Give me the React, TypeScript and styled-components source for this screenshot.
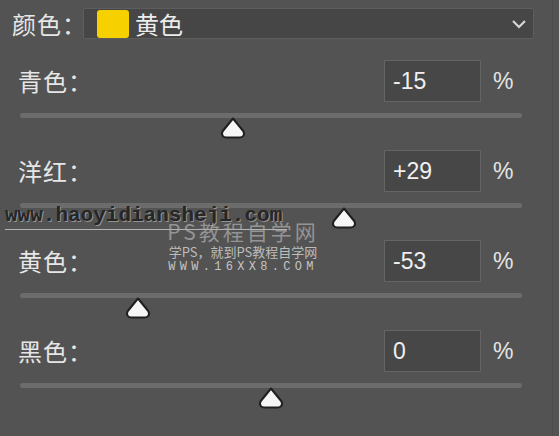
import React from "react";
import styled, { createGlobalStyle } from "styled-components";

const GlobalStyle = createGlobalStyle`
  html, body {
    margin: 0;
    padding: 0;
    background: #535353;
  }
  body {
    font-family: "Noto Sans CJK SC", "Noto Sans", sans-serif;
    color: #e2e2e2;
  }
`;

const Panel = styled.div`
  position: relative;
  width: 553px;
  height: 436px;
  overflow: hidden;
  background: #535353;
  border-right: 1px solid #4b4b4b;
  box-sizing: border-box;
`;

const Header = styled.div`
  display: flex;
  align-items: center;
  padding: 8px 0 0 12px;
  height: 31px;
  margin-bottom: 21px;
`;

const Label = styled.span`
  font-size: 24px;
  letter-spacing: 1px;
  line-height: 1;
  color: #e6e6e6;
  white-space: nowrap;
`;

const HeaderLabel = styled(Label)`
  width: 71px;
`;

const Dropdown = styled.div`
  display: flex;
  align-items: center;
  width: 451px;
  height: 31px;
  box-sizing: border-box;
  padding: 0 6px 0 13px;
  background: #464646;
  border: 1px solid #5d5d5d;
  border-radius: 2px;
`;

const Swatch = styled.span<{ $color: string }>`
  width: 32px;
  height: 28px;
  border-radius: 3px;
  background: ${(p) => p.$color};
  margin-right: 6px;
`;

const DropdownText = styled.span`
  flex: 1;
  font-size: 24px;
  line-height: 1;
  color: #ececec;
`;

const Rows = styled.div`
  display: flex;
  flex-direction: column;
  padding: 0 0 0 20px;
  width: 502px;
`;

const Row = styled.div`
  height: 90px;
`;

const TopLine = styled.div`
  display: flex;
  align-items: center;
  height: 42px;
  margin-bottom: 11px;
`;

const RowLabel = styled(Label)`
  flex: 1;
  margin-left: -2px;
`;

const ValueBox = styled.div`
  width: 97px;
  height: 42px;
  box-sizing: border-box;
  padding-left: 8px;
  display: flex;
  align-items: center;
  background: #474747;
  border: 1px solid #646464;
  font-family: "Liberation Sans", "Noto Sans", sans-serif;
  font-size: 23px;
  color: #efefef;
`;

const Unit = styled.span`
  width: 41px;
  padding-left: 12px;
  box-sizing: border-box;
  font-family: "Liberation Sans", sans-serif;
  font-size: 23px;
  color: #e4e4e4;
`;

const Track = styled.div`
  position: relative;
  height: 5px;
  border-radius: 3px;
  background: #6c6c6c;
`;

const Thumb = styled.svg`
  position: absolute;
  top: 3px;
  transform: translateX(-50%);
`;

/* site stamps laid over the panel */
const Watermark = styled.div`
  position: absolute;
  left: 5px;
  top: 205px;
  pointer-events: none;
`;

const SiteLink = styled.div`
  font-family: "Liberation Mono", monospace;
  font-weight: bold;
  font-size: 21px;
  line-height: 22px;
  color: #262626;
  text-shadow: 1px 1px 0 rgba(205, 205, 205, 0.55);
  border-bottom: 1px solid #b4b4b4;
  width: 282px;
  padding-bottom: 2px;
`;

const Stamp = styled.div`
  position: absolute;
  left: 158px;
  top: 14px;
  width: 160px;
  display: flex;
  flex-direction: column;
  align-items: center;
`;

const StampTitle = styled.div`
  font-family: "Noto Sans CJK SC", sans-serif;
  font-size: 21px;
  line-height: 24px;
  letter-spacing: 3px;
  color: rgba(170, 170, 170, 0.75);
`;

const StampLine = styled.div`
  font-family: "Noto Sans CJK SC", sans-serif;
  font-size: 13px;
  line-height: 17px;
  color: #bdbdbd;
`;

const StampUrl = styled.div`
  font-family: "Liberation Mono", monospace;
  font-size: 12px;
  line-height: 14px;
  letter-spacing: 4.3px;
  color: #c4c4c4;
`;

type Channel = { name: string; value: number };

const channels: Channel[] = [
  { name: "青色", value: -15 },
  { name: "洋红", value: 29 },
  { name: "黄色", value: -53 },
  { name: "黑色", value: 0 },
];

const formatValue = (v: number) => (v > 0 ? `+${v}` : `${v}`);

const SliderThumb: React.FC<{ value: number }> = ({ value }) => (
  <Thumb
    width="26"
    height="24"
    viewBox="0 0 26 24"
    style={{ left: `${((value + 100) / 200) * 100}%` }}
  >
    <path
      d="M13 2.5 L23.2 15 Q24.8 17.6 23.4 19.8 Q22.3 21.5 19.8 21.5 L6.2 21.5 Q3.7 21.5 2.6 19.8 Q1.2 17.6 2.8 15 Z"
      fill="#f6f6f6"
      stroke="#1f1f1f"
      strokeWidth="2"
      strokeLinejoin="round"
    />
  </Thumb>
);

const App: React.FC = () => {
  return (
    <>
      <GlobalStyle />
      <Panel>
        <Header>
          <HeaderLabel>颜色：</HeaderLabel>
          <Dropdown>
            <Swatch $color="#f7d000" />
            <DropdownText>黄色</DropdownText>
            <svg width="16" height="10" viewBox="0 0 16 10">
              <path d="M2 2 L8 8 L14 2" fill="none" stroke="#d6d6d6" strokeWidth="2.2" />
            </svg>
          </Dropdown>
        </Header>

        <Rows>
          {channels.map((c) => (
            <Row key={c.name}>
              <TopLine>
                <RowLabel>{c.name}：</RowLabel>
                <ValueBox>{formatValue(c.value)}</ValueBox>
                <Unit>%</Unit>
              </TopLine>
              <Track>
                <SliderThumb value={c.value} />
              </Track>
            </Row>
          ))}
        </Rows>

        <Watermark>
          <SiteLink>www.haoyidiansheji.com</SiteLink>
          <Stamp>
            <StampTitle>PS教程自学网</StampTitle>
            <StampLine>学PS，就到PS教程自学网</StampLine>
            <StampUrl>WWW.16XX8.COM</StampUrl>
          </Stamp>
        </Watermark>
      </Panel>
    </>
  );
};

export default App;
